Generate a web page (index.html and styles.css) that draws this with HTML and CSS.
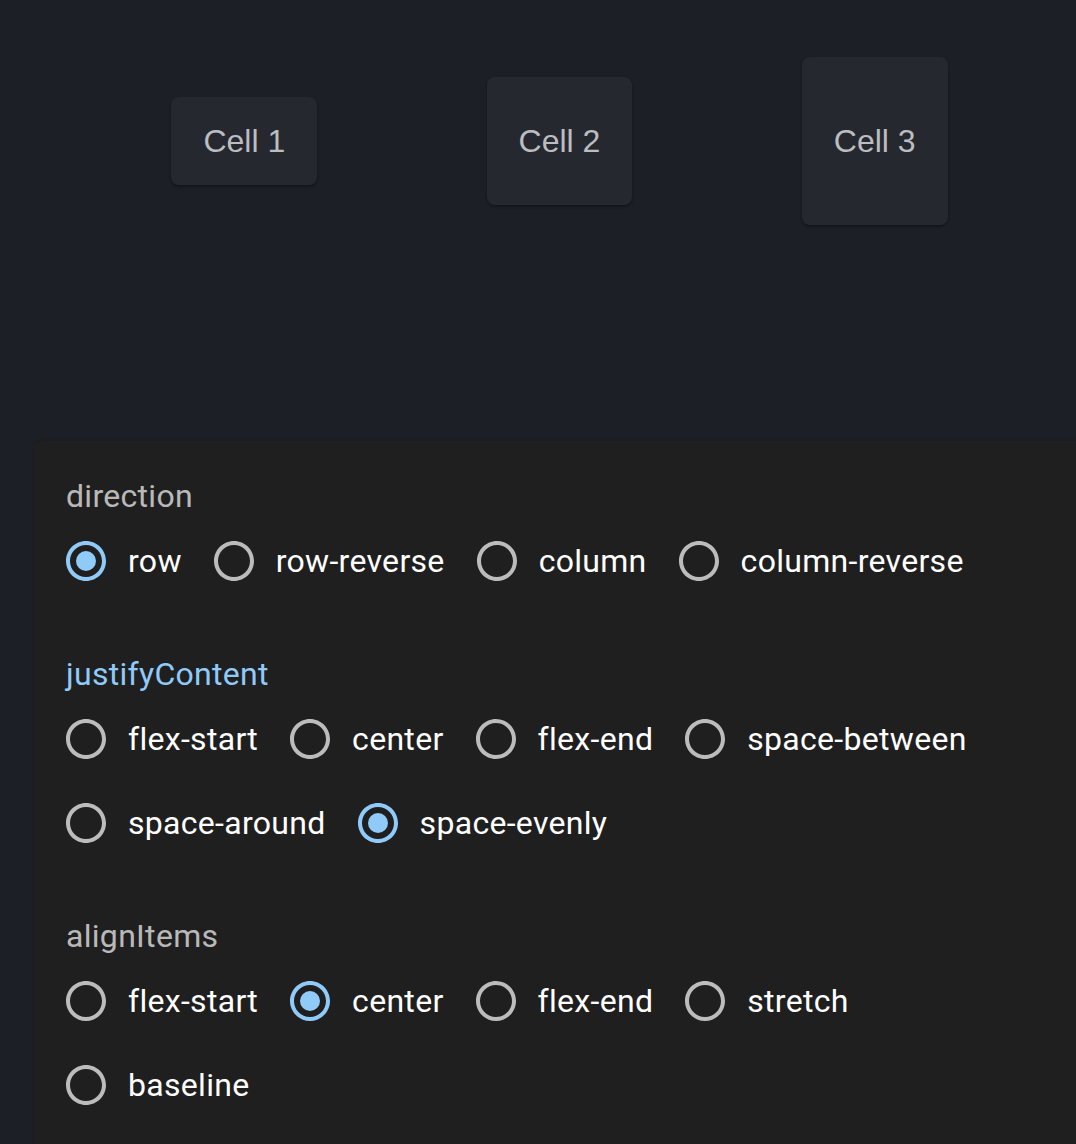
FILE: index.html
```html
<!DOCTYPE html>
<html>
<head>
<meta charset="utf-8">
<link rel="stylesheet" href="styles.css">
</head>
<body>
<div class="root">
  <div class="cells">
    <div class="cell-item"><div class="cell cell-1">Cell 1</div></div>
    <div class="cell-item"><div class="cell cell-2">Cell 2</div></div>
    <div class="cell-item"><div class="cell cell-3">Cell 3</div></div>
  </div>
  <div class="panel">
    <div class="sections">
      <div class="control">
        <div class="label">direction</div>
        <div class="group">
          <label class="opt"><span class="radio checked"><svg viewBox="0 0 24 24"><path d="M12 2C6.48 2 2 6.48 2 12s4.48 10 10 10 10-4.48 10-10S17.52 2 12 2zm0 18c-4.42 0-8-3.58-8-8s3.58-8 8-8 8 3.58 8 8-3.58 8-8 8z"/><circle cx="12" cy="12" r="5"/></svg></span><span class="opt-text">row</span></label>
          <label class="opt"><span class="radio"><svg viewBox="0 0 24 24"><path d="M12 2C6.48 2 2 6.48 2 12s4.48 10 10 10 10-4.48 10-10S17.52 2 12 2zm0 18c-4.42 0-8-3.58-8-8s3.58-8 8-8 8 3.58 8 8-3.58 8-8 8z"/></svg></span><span class="opt-text">row-reverse</span></label>
          <label class="opt"><span class="radio"><svg viewBox="0 0 24 24"><path d="M12 2C6.48 2 2 6.48 2 12s4.48 10 10 10 10-4.48 10-10S17.52 2 12 2zm0 18c-4.42 0-8-3.58-8-8s3.58-8 8-8 8 3.58 8 8-3.58 8-8 8z"/></svg></span><span class="opt-text">column</span></label>
          <label class="opt"><span class="radio"><svg viewBox="0 0 24 24"><path d="M12 2C6.48 2 2 6.48 2 12s4.48 10 10 10 10-4.48 10-10S17.52 2 12 2zm0 18c-4.42 0-8-3.58-8-8s3.58-8 8-8 8 3.58 8 8-3.58 8-8 8z"/></svg></span><span class="opt-text">column-reverse</span></label>
        </div>
      </div>
      <div class="control">
        <div class="label focused">justifyContent</div>
        <div class="group">
          <label class="opt"><span class="radio"><svg viewBox="0 0 24 24"><path d="M12 2C6.48 2 2 6.48 2 12s4.48 10 10 10 10-4.48 10-10S17.52 2 12 2zm0 18c-4.42 0-8-3.58-8-8s3.58-8 8-8 8 3.58 8 8-3.58 8-8 8z"/></svg></span><span class="opt-text">flex-start</span></label>
          <label class="opt"><span class="radio"><svg viewBox="0 0 24 24"><path d="M12 2C6.48 2 2 6.48 2 12s4.48 10 10 10 10-4.48 10-10S17.52 2 12 2zm0 18c-4.42 0-8-3.58-8-8s3.58-8 8-8 8 3.58 8 8-3.58 8-8 8z"/></svg></span><span class="opt-text">center</span></label>
          <label class="opt"><span class="radio"><svg viewBox="0 0 24 24"><path d="M12 2C6.48 2 2 6.48 2 12s4.48 10 10 10 10-4.48 10-10S17.52 2 12 2zm0 18c-4.42 0-8-3.58-8-8s3.58-8 8-8 8 3.58 8 8-3.58 8-8 8z"/></svg></span><span class="opt-text">flex-end</span></label>
          <label class="opt"><span class="radio"><svg viewBox="0 0 24 24"><path d="M12 2C6.48 2 2 6.48 2 12s4.48 10 10 10 10-4.48 10-10S17.52 2 12 2zm0 18c-4.42 0-8-3.58-8-8s3.58-8 8-8 8 3.58 8 8-3.58 8-8 8z"/></svg></span><span class="opt-text">space-between</span></label>
          <label class="opt"><span class="radio"><svg viewBox="0 0 24 24"><path d="M12 2C6.48 2 2 6.48 2 12s4.48 10 10 10 10-4.48 10-10S17.52 2 12 2zm0 18c-4.42 0-8-3.58-8-8s3.58-8 8-8 8 3.58 8 8-3.58 8-8 8z"/></svg></span><span class="opt-text">space-around</span></label>
          <label class="opt"><span class="radio checked"><svg viewBox="0 0 24 24"><path d="M12 2C6.48 2 2 6.48 2 12s4.48 10 10 10 10-4.48 10-10S17.52 2 12 2zm0 18c-4.42 0-8-3.58-8-8s3.58-8 8-8 8 3.58 8 8-3.58 8-8 8z"/><circle cx="12" cy="12" r="5"/></svg></span><span class="opt-text">space-evenly</span></label>
        </div>
      </div>
      <div class="control">
        <div class="label">alignItems</div>
        <div class="group">
          <label class="opt"><span class="radio"><svg viewBox="0 0 24 24"><path d="M12 2C6.48 2 2 6.48 2 12s4.48 10 10 10 10-4.48 10-10S17.52 2 12 2zm0 18c-4.42 0-8-3.58-8-8s3.58-8 8-8 8 3.58 8 8-3.58 8-8 8z"/></svg></span><span class="opt-text">flex-start</span></label>
          <label class="opt"><span class="radio checked"><svg viewBox="0 0 24 24"><path d="M12 2C6.48 2 2 6.48 2 12s4.48 10 10 10 10-4.48 10-10S17.52 2 12 2zm0 18c-4.42 0-8-3.58-8-8s3.58-8 8-8 8 3.58 8 8-3.58 8-8 8z"/><circle cx="12" cy="12" r="5"/></svg></span><span class="opt-text">center</span></label>
          <label class="opt"><span class="radio"><svg viewBox="0 0 24 24"><path d="M12 2C6.48 2 2 6.48 2 12s4.48 10 10 10 10-4.48 10-10S17.52 2 12 2zm0 18c-4.42 0-8-3.58-8-8s3.58-8 8-8 8 3.58 8 8-3.58 8-8 8z"/></svg></span><span class="opt-text">flex-end</span></label>
          <label class="opt"><span class="radio"><svg viewBox="0 0 24 24"><path d="M12 2C6.48 2 2 6.48 2 12s4.48 10 10 10 10-4.48 10-10S17.52 2 12 2zm0 18c-4.42 0-8-3.58-8-8s3.58-8 8-8 8 3.58 8 8-3.58 8-8 8z"/></svg></span><span class="opt-text">stretch</span></label>
          <label class="opt"><span class="radio"><svg viewBox="0 0 24 24"><path d="M12 2C6.48 2 2 6.48 2 12s4.48 10 10 10 10-4.48 10-10S17.52 2 12 2zm0 18c-4.42 0-8-3.58-8-8s3.58-8 8-8 8 3.58 8 8-3.58 8-8 8z"/></svg></span><span class="opt-text">baseline</span></label>
        </div>
      </div>
    </div>
  </div>
</div>
</body>
</html>
```

FILE: styles.css
```css
html, body {
  margin: 0;
  padding: 0;
  overflow: hidden;
  background: #1c1f26;
}

.root {
  margin-left: 34px;
  width: 1051px;
}

.cells {
  display: flex;
  justify-content: space-evenly;
  align-items: center;
  height: 282px;
  margin-left: -32px;
}

.cell-item {
  padding-left: 32px;
}

.cell {
  background: #25282f;
  border-radius: 8px;
  padding: 20px 32px;
  font-family: "Liberation Sans", Arial, sans-serif;
  font-size: 32px;
  line-height: 48px;
  color: #bcbdc0;
  box-shadow: 0 2px 2px rgba(0, 0, 0, 0.2), 0 1px 3px rgba(0, 0, 0, 0.12);
}

.cell-2 {
  padding-top: 40px;
  padding-bottom: 40px;
}

.cell-3 {
  padding-top: 60px;
  padding-bottom: 60px;
}

.panel {
  margin-top: 159px;
  background: #1f1f1f;
  border-radius: 8px;
  padding: 32px;
  box-shadow: 0 -1px 3px rgba(0, 0, 0, 0.15);
}

.sections {
  display: flex;
  flex-direction: column;
  gap: 48px;
}

.label {
  font-family: Roboto, "Noto Sans", sans-serif;
  font-size: 32px;
  line-height: 46px;
  letter-spacing: 0.3px;
  color: rgba(255, 255, 255, 0.7);
}

.label.focused {
  color: #90caf9;
}

.group {
  display: flex;
  flex-wrap: wrap;
}

.opt {
  display: inline-flex;
  align-items: center;
  margin-left: -22px;
  margin-right: 32px;
}

.radio {
  display: inline-flex;
  padding: 18px;
}

.radio svg {
  width: 48px;
  height: 48px;
  fill: rgba(255, 255, 255, 0.7);
}

.radio.checked svg {
  fill: #90caf9;
}

.opt-text {
  font-family: Roboto, "Noto Sans", sans-serif;
  font-size: 32px;
  line-height: 48px;
  letter-spacing: 0.3px;
  color: #ffffff;
}
```
